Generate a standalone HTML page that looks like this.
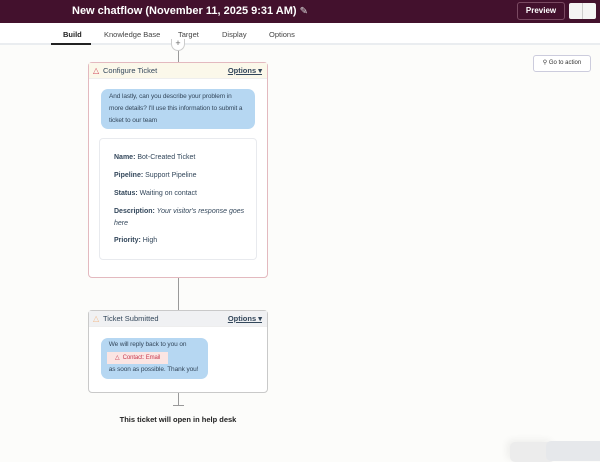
<!DOCTYPE html>
<html><head><style>
*{box-sizing:border-box;margin:0;padding:0}
body{width:600px;height:458px;overflow:hidden;background:#fcfcfa;font-family:"Liberation Sans",sans-serif;position:relative;color:#33475b}
.abs{position:absolute}
.hdr{left:0;top:0;width:600px;height:23px;background:#43112d;}
.title{left:72px;top:5px;color:#fff;font-weight:bold;font-size:11px}
.prev{left:517px;top:2px;width:48px;height:18px;border:1px solid #7a4a62;border-radius:3px;color:#fff;font-size:8px;font-weight:bold;text-align:center;line-height:16px}
.tog{left:569px;top:3px;width:27px;height:16px;background:#f4f4f4;border-radius:2px}
.tog:after{content:"";position:absolute;left:13px;top:0;width:1px;height:16px;background:#ccc}
.tabs{left:0;top:23px;width:600px;height:22px;background:#fff;border-bottom:2px solid #eaedf0}
.tab{top:30px;font-size:7.5px;color:#444}
.card{background:#fff;border:1px solid #e3b9bf;border-radius:4px}
.ch{height:16px;border-bottom:1px solid #eee;font-size:7.5px;line-height:15px;padding-left:14px;position:relative}
.opt{position:absolute;right:5px;top:0;font-weight:bold;text-decoration:underline;font-size:7.5px}
.bub{background:#b6d7f2;border-radius:7px;font-size:6.5px;line-height:12px;padding:4px 8px;color:#33475b}
.f{font-size:7px;margin-bottom:11px}
.line{background:#999;width:1px;left:178px}
</style></head><body>
<div class="abs hdr"></div>
<div class="abs title">New chatflow (November 11, 2025 9:31 AM) <span style="font-weight:normal;font-size:10px;color:#ddd">&#9998;</span></div>
<div class="abs prev">Preview</div>
<div class="abs tog"></div>
<div class="abs tabs"></div>
<div class="abs tab" style="left:63px;font-weight:bold;color:#222">Build</div>
<div class="abs" style="left:51px;top:43px;width:40px;height:2px;background:#222"></div>
<div class="abs tab" style="left:104px">Knowledge Base</div>
<div class="abs tab" style="left:178px">Target</div>
<div class="abs tab" style="left:222px">Display</div>
<div class="abs tab" style="left:269px">Options</div>
<div class="abs" style="left:533px;top:55px;width:58px;height:17px;background:#fff;border:1px solid #ccd;border-radius:3px;font-size:6px;line-height:15px;text-align:center;color:#333">&#9906; Go to action</div>
<div class="abs line" style="top:50px;height:12px"></div>
<div class="abs" style="left:171px;top:39px;width:14px;height:12px;border:1px solid #ccc;border-top:none;border-radius:0 0 7px 7px;background:#fff;font-size:9px;text-align:center;line-height:9px;color:#666">+</div>
<div class="abs card" style="left:88px;top:62px;width:180px;height:216px">
 <div class="ch" style="background:#fbf8ea"><span style="position:absolute;left:4px;color:#d0465a;font-size:8px">&#9651;</span>Configure Ticket<span class="opt">Options &#9662;</span></div>
</div>
<div class="abs bub" style="left:101px;top:89px;width:154px;height:40px;padding:2px 8px 0 8px;letter-spacing:-0.1px">And lastly, can you describe your problem in more details? I'll use this information to submit a ticket to our team</div>
<div class="abs" style="left:99px;top:138px;width:158px;height:122px;border:1px solid #e8eaee;border-radius:4px;background:#fff;padding:15px 0 0 14px">
 <div class="f"><b>Name:</b> Bot-Created Ticket</div>
 <div class="f"><b>Pipeline:</b> Support Pipeline</div>
 <div class="f"><b>Status:</b> Waiting on contact</div>
 <div class="f" style="line-height:12px;margin-top:-2px;margin-bottom:7px"><b>Description:</b> <i>Your visitor's response goes here</i></div>
 <div class="f"><b>Priority:</b> High</div>
</div>
<div class="abs line" style="top:278px;height:32px"></div>
<div class="abs card" style="left:88px;top:310px;width:180px;height:83px;border-color:#c9c9c9">
 <div class="ch" style="background:#f0f1f3"><span style="position:absolute;left:4px;color:#f2b98a;font-size:8px">&#9651;</span>Ticket Submitted<span class="opt">Options &#9662;</span></div>
</div>
<div class="abs bub" style="left:101px;top:338px;width:107px;height:41px;padding:1px 6px;line-height:12.5px;white-space:nowrap;letter-spacing:-0.1px">&nbsp;We will reply back to you on<br><span style="display:inline-block;background:#fbe5e3;color:#c73a4f;font-size:6px;padding:0 8px;line-height:12px">&#9651;&nbsp; Contact: Email</span><br>&nbsp;as soon as possible. Thank you!</div>
<div class="abs line" style="top:393px;height:13px"></div>
<div class="abs" style="left:173px;top:405px;width:11px;height:1px;background:#999"></div>
<div class="abs" style="left:0;width:356px;top:415px;text-align:center;font-size:7.5px;font-weight:bold;color:#222">This ticket will open in help desk</div>
<div class="abs" style="left:510px;top:442px;width:45px;height:20px;background:#ececec;border-radius:5px;box-shadow:-3px -2px 8px rgba(0,0,0,.06)"></div>
<div class="abs" style="left:546px;top:441px;width:60px;height:20px;background:#e6e8eb;border-radius:5px"></div>
</body></html>
